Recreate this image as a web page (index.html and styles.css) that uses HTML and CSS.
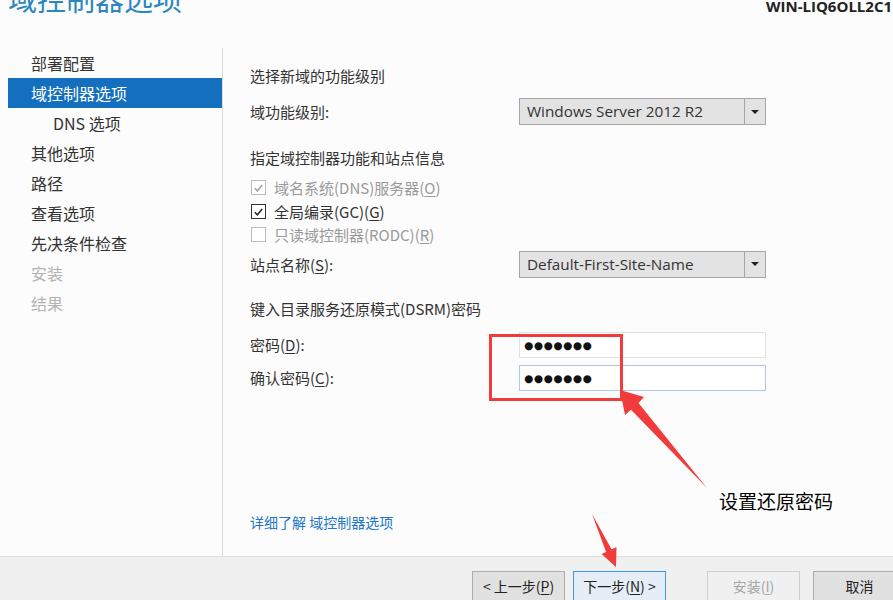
FILE: index.html
```html
<!DOCTYPE html>
<html lang="zh-CN">

<head>
    <meta charset="UTF-8">
    <title>域控制器选项</title>
    <link rel="stylesheet" href="styles.css">
</head>

<body>
    <div class="header">
        <h1 class="page-title">域控制器选项</h1>
        <div class="server-name">WIN-LIQ6OLL2C1</div>
    </div>

    <div class="wizard">
        <!-- Steps -->
        <ul class="steps">
            <li>部署配置</li>
            <li class="active">域控制器选项</li>
            <li class="sub">DNS 选项</li>
            <li>其他选项</li>
            <li>路径</li>
            <li>查看选项</li>
            <li>先决条件检查</li>
            <li class="disabled">安装</li>
            <li class="disabled">结果</li>
        </ul>

        <!-- Page content -->
        <div class="page">
            <div class="section-title">选择新域的功能级别</div>
            <div class="field-row first">
                <label>域功能级别:</label>
                <div class="combo"><span class="combo-value">Windows Server 2012 R2</span><span class="combo-arrow"></span></div>
            </div>

            <div class="section-title gap-top">指定域控制器功能和站点信息</div>
            <div class="checks">
                <div class="check-row disabled">
                    <span class="box checked"><svg viewBox="0 0 14 14" width="14" height="14"><path d="M3 7.2 L5.8 10 L11 3.8" fill="none" stroke="currentColor" stroke-width="1.6"/></svg></span>
                    <span>域名系统(DNS)服务器(<u>O</u>)</span>
                </div>
                <div class="check-row">
                    <span class="box checked"><svg viewBox="0 0 14 14" width="14" height="14"><path d="M3 7.2 L5.8 10 L11 3.8" fill="none" stroke="currentColor" stroke-width="1.6"/></svg></span>
                    <span>全局编录(GC)(<u>G</u>)</span>
                </div>
                <div class="check-row disabled">
                    <span class="box"></span>
                    <span>只读域控制器(RODC)(<u>R</u>)</span>
                </div>
            </div>
            <div class="field-row site">
                <label>站点名称(<u>S</u>):</label>
                <div class="combo"><span class="combo-value">Default-First-Site-Name</span><span class="combo-arrow"></span></div>
            </div>

            <div class="section-title dsrm">键入目录服务还原模式(DSRM)密码</div>
            <div class="field-row pwd">
                <label>密码(<u>D</u>):</label>
                <div class="text-input">●●●●●●●</div>
            </div>
            <div class="field-row pwd-confirm">
                <label>确认密码(<u>C</u>):</label>
                <div class="text-input focused">●●●●●●●</div>
            </div>

            <a class="help-link">详细了解 域控制器选项</a>
        </div>
    </div>

    <!-- Buttons -->
    <div class="button-bar">
        <button class="btn">&lt; 上一步(<u>P</u>)</button>
        <button class="btn default">下一步(<u>N</u>) &gt;</button>
        <button class="btn disabled install">安装(<u>I</u>)</button>
        <button class="btn cancel">取消</button>
    </div>

    <!-- Screenshot annotations -->
    <div class="mark-box"></div>
    <svg class="mark-arrows" width="893" height="600" viewBox="0 0 893 600">
        <polygon points="620,390 644,397 638.5,403 707,488 631,409.7 625,415" fill="#f23b3b"/>
        <polygon points="616,567 601.6,554 606.1,551.9 592,514 611.5,549.3 616.5,547.2" fill="#f23b3b"/>
    </svg>
    <div class="mark-note">设置还原密码</div>
</body>

</html>
```

FILE: styles.css
```css
body {
    margin: 0;
    width: 893px;
    height: 600px;
    overflow: hidden;
    position: relative;
    background-color: #fcfcfc;
    font-family: "Noto Sans CJK SC", "Noto Sans", sans-serif;
    color: #333;
}

u {
    text-decoration: underline;
    text-underline-offset: 2px;
}

/* Header */
.header {
    display: grid;
    grid-template-columns: 766px max-content;
    height: 48px;
}

.page-title {
    margin: -20px 0 0 0;
    padding-left: 8px;
    font-size: 29px;
    line-height: 36px;
    font-weight: normal;
    color: #2d86c0;
    white-space: nowrap;
}

.server-name {
    margin-top: -4px;
    font-family: "Open Sans", sans-serif;
    font-size: 15px;
    line-height: 20px;
    font-weight: bold;
    color: #222;
    white-space: nowrap;
}

/* Main area */
.wizard {
    display: flex;
    height: 508px;
}

.steps {
    list-style: none;
    margin: 0;
    padding: 0 0 0 8px;
    width: 214px;
    border-right: 1px solid #dadada;
}

.steps li {
    height: 30px;
    line-height: 30px;
    padding-left: 23px;
    font-size: 16px;
    color: #333;
}

.steps li.active {
    background-color: #1470be;
    color: white;
}

.steps li.sub {
    padding-left: 45px;
}

.steps li.disabled {
    color: #b4b4b4;
}

.page {
    flex: 1;
    display: flex;
    flex-direction: column;
    padding: 18px 0 24px 27px;
    font-size: 15px;
}

.section-title {
    line-height: 20px;
}

.section-title.gap-top {
    margin-top: 23px;
}

.section-title.dsrm {
    margin-top: 21px;
}

.field-row {
    display: flex;
    align-items: center;
}

.field-row label {
    width: 269px;
}

.field-row.first {
    margin-top: 12px;
}

.field-row.site {
    margin-top: 4px;
}

.field-row.pwd {
    margin-top: 13px;
}

.field-row.pwd-confirm {
    margin-top: 7px;
}

/* Combo boxes */
.combo {
    display: flex;
    width: 245px;
    height: 25px;
    border: 1px solid #a6a6a6;
    background-color: #e3e3e3;
}

.combo-value {
    flex: 1;
    padding-left: 7px;
    line-height: 25px;
    font-family: "Open Sans", sans-serif;
    font-size: 15.3px;
    color: #333;
}

.combo-arrow {
    width: 20px;
    border-left: 1px solid #a6a6a6;
    display: flex;
    align-items: center;
    justify-content: center;
}

.combo-arrow::after {
    content: "";
    border-left: 4px solid transparent;
    border-right: 4px solid transparent;
    border-top: 4px solid #222;
}

/* Checkboxes */
.checks {
    margin-top: 8px;
}

.check-row {
    display: flex;
    align-items: center;
    height: 23.5px;
    padding-left: 1px;
}

.check-row.disabled {
    color: #9a9a9a;
}

.box {
    width: 13px;
    height: 13px;
    margin-right: 8px;
    border: 1px solid #333;
    background-color: white;
    color: #222;
    display: flex;
}

.check-row.disabled .box {
    border-color: #bcbcbc;
    color: #a0a0a0;
}

/* Password fields */
.text-input {
    width: 241px;
    height: 24px;
    padding-left: 4px;
    border: 1px solid #e3e3e3;
    background-color: white;
    font-family: "DejaVu Sans", sans-serif;
    font-size: 10.5px;
    line-height: 24px;
    letter-spacing: 0.6px;
    color: #111;
}

.text-input.focused {
    border-color: #acc8e6;
}

.help-link {
    margin-top: auto;
    line-height: 20px;
    font-size: 14px;
    color: #2277c8;
}

/* Bottom bar */
.button-bar {
    display: flex;
    height: 43px;
    padding: 14px 0 0 472px;
    border-top: 1px solid #dedede;
    background-color: #f0f0f0;
}

.btn {
    flex-shrink: 0;
    width: 93px;
    height: 30px;
    padding: 0;
    font-family: "Noto Sans CJK SC", sans-serif;
    font-size: 14px;
    color: #222;
    background-color: #e1e1e1;
    border: 1px solid #adadad;
}

.btn.default {
    margin-left: 8px;
    border-color: #3c9ae8;
    background-color: #e5eef6;
}

.btn.install {
    margin-left: 41px;
}

.btn.cancel {
    margin-left: 13px;
}

.btn.disabled {
    color: #a6a6a6;
    background-color: #f0f0f0;
    border-color: #cfcfcf;
}

/* Annotations on top of the screenshot */
.mark-box {
    position: absolute;
    left: 489px;
    top: 334px;
    width: 128px;
    height: 61px;
    border: 3px solid #f03c3c;
}

.mark-arrows {
    position: absolute;
    left: 0;
    top: 0;
}

.mark-note {
    position: absolute;
    left: 719px;
    top: 489px;
    font-size: 19px;
    line-height: 24px;
    color: #000;
}
```
